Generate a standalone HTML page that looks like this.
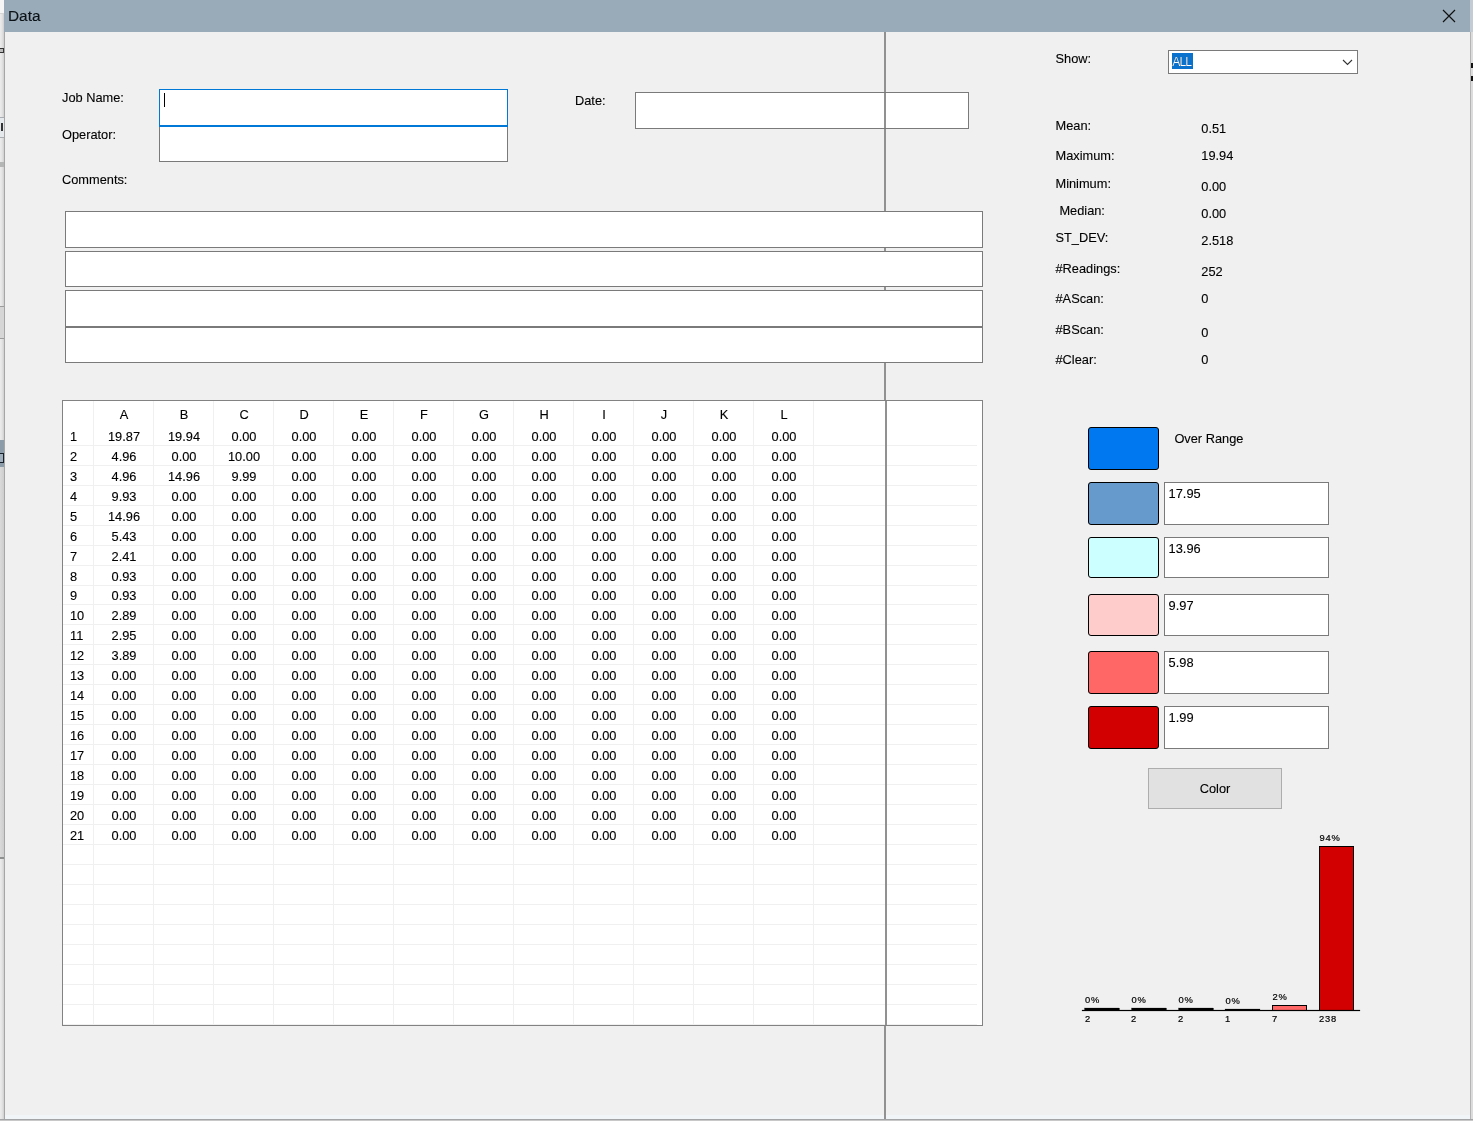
<!DOCTYPE html><html><head><meta charset="utf-8"><title>Data</title><style>
*{box-sizing:border-box;margin:0;padding:0}
html,body{width:1473px;height:1121px;overflow:hidden;background:#f0f0f0}
body{position:relative;font-family:"Liberation Sans",sans-serif;font-size:12.8px;color:#000;line-height:16px;-webkit-text-stroke:0.12px #000}
.wrap{position:absolute;left:0;top:0;width:1473px;height:1121px;will-change:transform}
.a{position:absolute;white-space:nowrap}
.t{position:absolute;white-space:nowrap;height:16px;line-height:16px}
.box{position:absolute;background:#fff;border:1px solid #7a7a7a}
.sw{position:absolute;left:1088px;width:71px;border:1px solid #000;border-radius:3px}
.tbl{position:absolute;left:62px;top:400px;width:921px;height:626px;background:#fff;border:1px solid #828282;overflow:hidden}
.row{position:absolute;left:0;width:914px;height:20px;border-bottom:1px solid #f0f0f0;line-height:20px}
.row span{position:absolute;top:1px;width:60px;text-align:center}
.row span.n{left:7px;width:24px;text-align:left}
.vl{position:absolute;top:0;width:1px;height:624px;background:#f0f0f0}
</style></head><body><div class="wrap">
<div class="a" style="left:0;top:0;width:5px;height:1121px;background:linear-gradient(90deg,#ececec 0,#e4e4e4 2px,#cfcfcf 4px)"></div>
<div class="a" style="left:0;top:0;width:4px;height:13px;background:#f6f6f6"></div>
<div class="a" style="left:0;top:13px;width:4px;height:1px;background:#d6d6d6"></div>
<div class="a" style="left:0;top:48px;width:4px;height:5px;border:1px solid #333;border-left:0;background:#bbb"></div>
<div class="a" style="left:0;top:117px;width:4px;height:21px;background:#e6e9ec;border-top:1px solid #a9adb1;border-bottom:1px solid #a9adb1"></div>
<div class="a" style="left:1px;top:123px;width:2px;height:8px;background:#333"></div>
<div class="a" style="left:0;top:162px;width:4px;height:5px;background:#b4b6b6"></div>
<div class="a" style="left:0;top:306px;width:4px;height:33px;background:#d6d6d6;border-top:1px solid #9c9c9c;border-bottom:1px solid #9c9c9c"></div>
<div class="a" style="left:0;top:440px;width:5px;height:27px;background:#8c9ca8"></div>
<div class="a" style="left:0;top:453px;width:4px;height:10px;border:1px solid #16202a;border-left:0;background:#9fb0bc"></div>
<div class="a" style="left:0;top:467px;width:4px;height:390px;background:linear-gradient(90deg,#dadada,#cdcdcd)"></div>
<div class="a" style="left:0;top:857px;width:4px;height:2px;background:#8e9090"></div>
<div class="a" style="left:4px;top:32px;width:1px;height:1087px;background:#a6a6a6"></div>
<div class="a" style="left:1470px;top:0;width:3px;height:1121px;background:#dcdcdc"></div>
<div class="a" style="left:1470px;top:0;width:3px;height:32px;background:#c3ccd4"></div>
<div class="a" style="left:1470px;top:32px;width:1px;height:1087px;background:#b4b4b4"></div>
<div class="a" style="left:1471px;top:63px;width:2px;height:5px;background:#111"></div>
<div class="a" style="left:1471px;top:76px;width:2px;height:5px;background:#111"></div>
<div class="a" style="left:5px;top:1115px;width:1465px;height:4px;background:#f2f5f8"></div>
<div class="a" style="left:0;top:1119px;width:1473px;height:1px;background:#a2a4a6"></div>
<div class="a" style="left:0;top:1120px;width:1473px;height:1px;background:#c8c8c8"></div>
<div class="a" style="left:4px;top:0;width:1466px;height:32px;background:#99abb9"></div>
<div class="a" style="left:8px;top:7px;font-size:15.4px;line-height:18px;color:#0b1218">Data</div>
<svg class="a" style="left:1442px;top:9px" width="14" height="14" viewBox="0 0 14 14"><path d="M1 1 L13 13 M13 1 L1 13" stroke="#111" stroke-width="1.2" fill="none"/></svg>
<div class="a" style="left:884px;top:32px;width:2px;height:1087px;background:#919191"></div>
<div class="t" style="left:62px;top:89.90px;">Job Name:</div>
<div class="t" style="left:62px;top:126.90px;">Operator:</div>
<div class="t" style="left:62px;top:172.00px;">Comments:</div>
<div class="t" style="left:575px;top:93.20px;">Date:</div>
<div class="box" style="left:159px;top:126px;width:349px;height:36px"></div>
<div class="box" style="left:159px;top:89px;width:349px;height:38px;border-color:#0078d7;border-bottom-width:2px"></div>
<div class="a" style="left:164px;top:93px;width:1px;height:14px;background:#000"></div>
<div class="box" style="left:635px;top:92px;width:334px;height:37px"></div>
<div class="a" style="left:884px;top:93px;width:2px;height:35px;background:#919191"></div>
<div class="box" style="left:65px;top:211px;width:918px;height:37px"></div>
<div class="box" style="left:65px;top:251px;width:918px;height:36px"></div>
<div class="box" style="left:65px;top:290px;width:918px;height:37px"></div>
<div class="box" style="left:65px;top:327px;width:918px;height:36px"></div>
<div class="a" style="left:65px;top:326px;width:918px;height:2px;background:#7a7a7a"></div>
<div class="tbl">
<div class="row" style="top:0;height:25px;line-height:26px;border-bottom-color:#fff"><span class="n"></span><span style="left:31px">A</span><span style="left:91px">B</span><span style="left:151px">C</span><span style="left:211px">D</span><span style="left:271px">E</span><span style="left:331px">F</span><span style="left:391px">G</span><span style="left:451px">H</span><span style="left:511px">I</span><span style="left:571px">J</span><span style="left:631px">K</span><span style="left:691px">L</span></div>
<div class="row" style="top:25px"><span class="n">1</span><span style="left:31px">19.87</span><span style="left:91px">19.94</span><span style="left:151px">0.00</span><span style="left:211px">0.00</span><span style="left:271px">0.00</span><span style="left:331px">0.00</span><span style="left:391px">0.00</span><span style="left:451px">0.00</span><span style="left:511px">0.00</span><span style="left:571px">0.00</span><span style="left:631px">0.00</span><span style="left:691px">0.00</span></div>
<div class="row" style="top:45px"><span class="n">2</span><span style="left:31px">4.96</span><span style="left:91px">0.00</span><span style="left:151px">10.00</span><span style="left:211px">0.00</span><span style="left:271px">0.00</span><span style="left:331px">0.00</span><span style="left:391px">0.00</span><span style="left:451px">0.00</span><span style="left:511px">0.00</span><span style="left:571px">0.00</span><span style="left:631px">0.00</span><span style="left:691px">0.00</span></div>
<div class="row" style="top:65px"><span class="n">3</span><span style="left:31px">4.96</span><span style="left:91px">14.96</span><span style="left:151px">9.99</span><span style="left:211px">0.00</span><span style="left:271px">0.00</span><span style="left:331px">0.00</span><span style="left:391px">0.00</span><span style="left:451px">0.00</span><span style="left:511px">0.00</span><span style="left:571px">0.00</span><span style="left:631px">0.00</span><span style="left:691px">0.00</span></div>
<div class="row" style="top:85px"><span class="n">4</span><span style="left:31px">9.93</span><span style="left:91px">0.00</span><span style="left:151px">0.00</span><span style="left:211px">0.00</span><span style="left:271px">0.00</span><span style="left:331px">0.00</span><span style="left:391px">0.00</span><span style="left:451px">0.00</span><span style="left:511px">0.00</span><span style="left:571px">0.00</span><span style="left:631px">0.00</span><span style="left:691px">0.00</span></div>
<div class="row" style="top:105px"><span class="n">5</span><span style="left:31px">14.96</span><span style="left:91px">0.00</span><span style="left:151px">0.00</span><span style="left:211px">0.00</span><span style="left:271px">0.00</span><span style="left:331px">0.00</span><span style="left:391px">0.00</span><span style="left:451px">0.00</span><span style="left:511px">0.00</span><span style="left:571px">0.00</span><span style="left:631px">0.00</span><span style="left:691px">0.00</span></div>
<div class="row" style="top:125px"><span class="n">6</span><span style="left:31px">5.43</span><span style="left:91px">0.00</span><span style="left:151px">0.00</span><span style="left:211px">0.00</span><span style="left:271px">0.00</span><span style="left:331px">0.00</span><span style="left:391px">0.00</span><span style="left:451px">0.00</span><span style="left:511px">0.00</span><span style="left:571px">0.00</span><span style="left:631px">0.00</span><span style="left:691px">0.00</span></div>
<div class="row" style="top:145px"><span class="n">7</span><span style="left:31px">2.41</span><span style="left:91px">0.00</span><span style="left:151px">0.00</span><span style="left:211px">0.00</span><span style="left:271px">0.00</span><span style="left:331px">0.00</span><span style="left:391px">0.00</span><span style="left:451px">0.00</span><span style="left:511px">0.00</span><span style="left:571px">0.00</span><span style="left:631px">0.00</span><span style="left:691px">0.00</span></div>
<div class="row" style="top:165px"><span class="n">8</span><span style="left:31px">0.93</span><span style="left:91px">0.00</span><span style="left:151px">0.00</span><span style="left:211px">0.00</span><span style="left:271px">0.00</span><span style="left:331px">0.00</span><span style="left:391px">0.00</span><span style="left:451px">0.00</span><span style="left:511px">0.00</span><span style="left:571px">0.00</span><span style="left:631px">0.00</span><span style="left:691px">0.00</span></div>
<div class="row" style="top:184px"><span class="n">9</span><span style="left:31px">0.93</span><span style="left:91px">0.00</span><span style="left:151px">0.00</span><span style="left:211px">0.00</span><span style="left:271px">0.00</span><span style="left:331px">0.00</span><span style="left:391px">0.00</span><span style="left:451px">0.00</span><span style="left:511px">0.00</span><span style="left:571px">0.00</span><span style="left:631px">0.00</span><span style="left:691px">0.00</span></div>
<div class="row" style="top:204px"><span class="n">10</span><span style="left:31px">2.89</span><span style="left:91px">0.00</span><span style="left:151px">0.00</span><span style="left:211px">0.00</span><span style="left:271px">0.00</span><span style="left:331px">0.00</span><span style="left:391px">0.00</span><span style="left:451px">0.00</span><span style="left:511px">0.00</span><span style="left:571px">0.00</span><span style="left:631px">0.00</span><span style="left:691px">0.00</span></div>
<div class="row" style="top:224px"><span class="n">11</span><span style="left:31px">2.95</span><span style="left:91px">0.00</span><span style="left:151px">0.00</span><span style="left:211px">0.00</span><span style="left:271px">0.00</span><span style="left:331px">0.00</span><span style="left:391px">0.00</span><span style="left:451px">0.00</span><span style="left:511px">0.00</span><span style="left:571px">0.00</span><span style="left:631px">0.00</span><span style="left:691px">0.00</span></div>
<div class="row" style="top:244px"><span class="n">12</span><span style="left:31px">3.89</span><span style="left:91px">0.00</span><span style="left:151px">0.00</span><span style="left:211px">0.00</span><span style="left:271px">0.00</span><span style="left:331px">0.00</span><span style="left:391px">0.00</span><span style="left:451px">0.00</span><span style="left:511px">0.00</span><span style="left:571px">0.00</span><span style="left:631px">0.00</span><span style="left:691px">0.00</span></div>
<div class="row" style="top:264px"><span class="n">13</span><span style="left:31px">0.00</span><span style="left:91px">0.00</span><span style="left:151px">0.00</span><span style="left:211px">0.00</span><span style="left:271px">0.00</span><span style="left:331px">0.00</span><span style="left:391px">0.00</span><span style="left:451px">0.00</span><span style="left:511px">0.00</span><span style="left:571px">0.00</span><span style="left:631px">0.00</span><span style="left:691px">0.00</span></div>
<div class="row" style="top:284px"><span class="n">14</span><span style="left:31px">0.00</span><span style="left:91px">0.00</span><span style="left:151px">0.00</span><span style="left:211px">0.00</span><span style="left:271px">0.00</span><span style="left:331px">0.00</span><span style="left:391px">0.00</span><span style="left:451px">0.00</span><span style="left:511px">0.00</span><span style="left:571px">0.00</span><span style="left:631px">0.00</span><span style="left:691px">0.00</span></div>
<div class="row" style="top:304px"><span class="n">15</span><span style="left:31px">0.00</span><span style="left:91px">0.00</span><span style="left:151px">0.00</span><span style="left:211px">0.00</span><span style="left:271px">0.00</span><span style="left:331px">0.00</span><span style="left:391px">0.00</span><span style="left:451px">0.00</span><span style="left:511px">0.00</span><span style="left:571px">0.00</span><span style="left:631px">0.00</span><span style="left:691px">0.00</span></div>
<div class="row" style="top:324px"><span class="n">16</span><span style="left:31px">0.00</span><span style="left:91px">0.00</span><span style="left:151px">0.00</span><span style="left:211px">0.00</span><span style="left:271px">0.00</span><span style="left:331px">0.00</span><span style="left:391px">0.00</span><span style="left:451px">0.00</span><span style="left:511px">0.00</span><span style="left:571px">0.00</span><span style="left:631px">0.00</span><span style="left:691px">0.00</span></div>
<div class="row" style="top:344px"><span class="n">17</span><span style="left:31px">0.00</span><span style="left:91px">0.00</span><span style="left:151px">0.00</span><span style="left:211px">0.00</span><span style="left:271px">0.00</span><span style="left:331px">0.00</span><span style="left:391px">0.00</span><span style="left:451px">0.00</span><span style="left:511px">0.00</span><span style="left:571px">0.00</span><span style="left:631px">0.00</span><span style="left:691px">0.00</span></div>
<div class="row" style="top:364px"><span class="n">18</span><span style="left:31px">0.00</span><span style="left:91px">0.00</span><span style="left:151px">0.00</span><span style="left:211px">0.00</span><span style="left:271px">0.00</span><span style="left:331px">0.00</span><span style="left:391px">0.00</span><span style="left:451px">0.00</span><span style="left:511px">0.00</span><span style="left:571px">0.00</span><span style="left:631px">0.00</span><span style="left:691px">0.00</span></div>
<div class="row" style="top:384px"><span class="n">19</span><span style="left:31px">0.00</span><span style="left:91px">0.00</span><span style="left:151px">0.00</span><span style="left:211px">0.00</span><span style="left:271px">0.00</span><span style="left:331px">0.00</span><span style="left:391px">0.00</span><span style="left:451px">0.00</span><span style="left:511px">0.00</span><span style="left:571px">0.00</span><span style="left:631px">0.00</span><span style="left:691px">0.00</span></div>
<div class="row" style="top:404px"><span class="n">20</span><span style="left:31px">0.00</span><span style="left:91px">0.00</span><span style="left:151px">0.00</span><span style="left:211px">0.00</span><span style="left:271px">0.00</span><span style="left:331px">0.00</span><span style="left:391px">0.00</span><span style="left:451px">0.00</span><span style="left:511px">0.00</span><span style="left:571px">0.00</span><span style="left:631px">0.00</span><span style="left:691px">0.00</span></div>
<div class="row" style="top:424px"><span class="n">21</span><span style="left:31px">0.00</span><span style="left:91px">0.00</span><span style="left:151px">0.00</span><span style="left:211px">0.00</span><span style="left:271px">0.00</span><span style="left:331px">0.00</span><span style="left:391px">0.00</span><span style="left:451px">0.00</span><span style="left:511px">0.00</span><span style="left:571px">0.00</span><span style="left:631px">0.00</span><span style="left:691px">0.00</span></div>
<div class="row" style="top:444px"></div>
<div class="row" style="top:464px"></div>
<div class="row" style="top:484px"></div>
<div class="row" style="top:504px"></div>
<div class="row" style="top:524px"></div>
<div class="row" style="top:544px"></div>
<div class="row" style="top:564px"></div>
<div class="row" style="top:584px"></div>
<div class="row" style="top:604px"></div>
<div class="vl" style="left:30px"></div>
<div class="vl" style="left:90px"></div>
<div class="vl" style="left:150px"></div>
<div class="vl" style="left:210px"></div>
<div class="vl" style="left:270px"></div>
<div class="vl" style="left:330px"></div>
<div class="vl" style="left:390px"></div>
<div class="vl" style="left:450px"></div>
<div class="vl" style="left:510px"></div>
<div class="vl" style="left:570px"></div>
<div class="vl" style="left:630px"></div>
<div class="vl" style="left:690px"></div>
<div class="vl" style="left:750px"></div>
<div class="a" style="left:822px;top:0;width:2px;height:624px;background:#919191"></div>
</div>
<div class="t" style="left:1055.5px;top:50.80px;">Show:</div>
<div class="box" style="left:1168px;top:50px;width:190px;height:24px"></div>
<div class="a" style="left:1172px;top:53px;width:21px;height:16px;background:#0a72cc"></div>
<div class="t" style="left:1172.3px;top:53.70px;color:#fff;letter-spacing:-1px;font-size:12.2px">ALL</div>
<svg class="a" style="left:1342px;top:59px" width="11" height="7" viewBox="0 0 11 7"><path d="M1 1 L5.5 5.5 L10 1" stroke="#333" stroke-width="1.1" fill="none"/></svg>
<div class="t" style="left:1055.5px;top:118.20px;">Mean:</div>
<div class="t" style="left:1201.3px;top:120.70px;">0.51</div>
<div class="t" style="left:1055.5px;top:148.30px;">Maximum:</div>
<div class="t" style="left:1201.3px;top:148.30px;">19.94</div>
<div class="t" style="left:1055.5px;top:176.00px;">Minimum:</div>
<div class="t" style="left:1201.3px;top:179.00px;">0.00</div>
<div class="t" style="left:1059.4px;top:203.20px;">Median:</div>
<div class="t" style="left:1201.3px;top:206.20px;">0.00</div>
<div class="t" style="left:1055.5px;top:230.40px;">ST_DEV:</div>
<div class="t" style="left:1201.3px;top:233.40px;">2.518</div>
<div class="t" style="left:1055.5px;top:261.10px;">#Readings:</div>
<div class="t" style="left:1201.3px;top:264.10px;">252</div>
<div class="t" style="left:1055.5px;top:291.20px;">#AScan:</div>
<div class="t" style="left:1201.3px;top:291.20px;">0</div>
<div class="t" style="left:1055.5px;top:322.10px;">#BScan:</div>
<div class="t" style="left:1201.3px;top:325.10px;">0</div>
<div class="t" style="left:1055.5px;top:352.00px;">#Clear:</div>
<div class="t" style="left:1201.3px;top:352.00px;">0</div>
<div class="sw" style="top:427px;height:43px;background:#0078f0"></div>
<div class="sw" style="top:482px;height:43px;background:#6699cc"></div>
<div class="box" style="left:1164px;top:482px;width:165px;height:43px"></div>
<div class="t" style="left:1168.6px;top:485.60px;">17.95</div>
<div class="sw" style="top:537px;height:41px;background:#ccffff"></div>
<div class="box" style="left:1164px;top:537px;width:165px;height:41px"></div>
<div class="t" style="left:1168.6px;top:540.60px;">13.96</div>
<div class="sw" style="top:594px;height:42px;background:#ffcccc"></div>
<div class="box" style="left:1164px;top:594px;width:165px;height:42px"></div>
<div class="t" style="left:1168.6px;top:597.60px;">9.97</div>
<div class="sw" style="top:651px;height:43px;background:#ff6666"></div>
<div class="box" style="left:1164px;top:651px;width:165px;height:43px"></div>
<div class="t" style="left:1168.6px;top:654.60px;">5.98</div>
<div class="sw" style="top:706px;height:43px;background:#d20000"></div>
<div class="box" style="left:1164px;top:706px;width:165px;height:43px"></div>
<div class="t" style="left:1168.6px;top:709.60px;">1.99</div>
<div class="t" style="left:1174.4px;top:431.40px;">Over Range</div>
<div class="a" style="left:1148px;top:768px;width:134px;height:41px;background:#e1e1e1;border:1px solid #adadad"></div>
<div class="t" style="left:1148px;width:134px;text-align:center;top:780.90px">Color</div>
<svg class="a" style="left:1075px;top:825px" width="300" height="210" viewBox="1075 825 300 210" font-family="Liberation Sans, sans-serif" font-size="9.4" letter-spacing="0.8" fill="#000" stroke="#000" stroke-width="0.2">
<rect x="1319.5" y="846.5" width="34" height="164" fill="#d20000" stroke="#000" stroke-width="1"/>
<rect x="1272.5" y="1005.5" width="34" height="5" fill="#ff6666" stroke="#000" stroke-width="1"/>
<rect x="1084.5" y="1008" width="35" height="2.5" fill="#000"/>
<rect x="1131.5" y="1008" width="35" height="2.5" fill="#000"/>
<rect x="1178.5" y="1008" width="35" height="2.5" fill="#000"/>
<rect x="1225" y="1009" width="35" height="1.5" fill="#000"/>
<rect x="1082" y="1010" width="278" height="1" fill="#000"/>
<text x="1085" y="1003">0%</text>
<text x="1131.5" y="1003">0%</text>
<text x="1178.5" y="1003">0%</text>
<text x="1225.5" y="1004">0%</text>
<text x="1272.5" y="1000">2%</text>
<text x="1319.5" y="840.6">94%</text>
<text x="1085" y="1021.7">2</text>
<text x="1131" y="1021.7">2</text>
<text x="1178" y="1021.7">2</text>
<text x="1225" y="1021.7">1</text>
<text x="1272" y="1021.7">7</text>
<text x="1319" y="1021.7">238</text>
</svg>
</div></body></html>
